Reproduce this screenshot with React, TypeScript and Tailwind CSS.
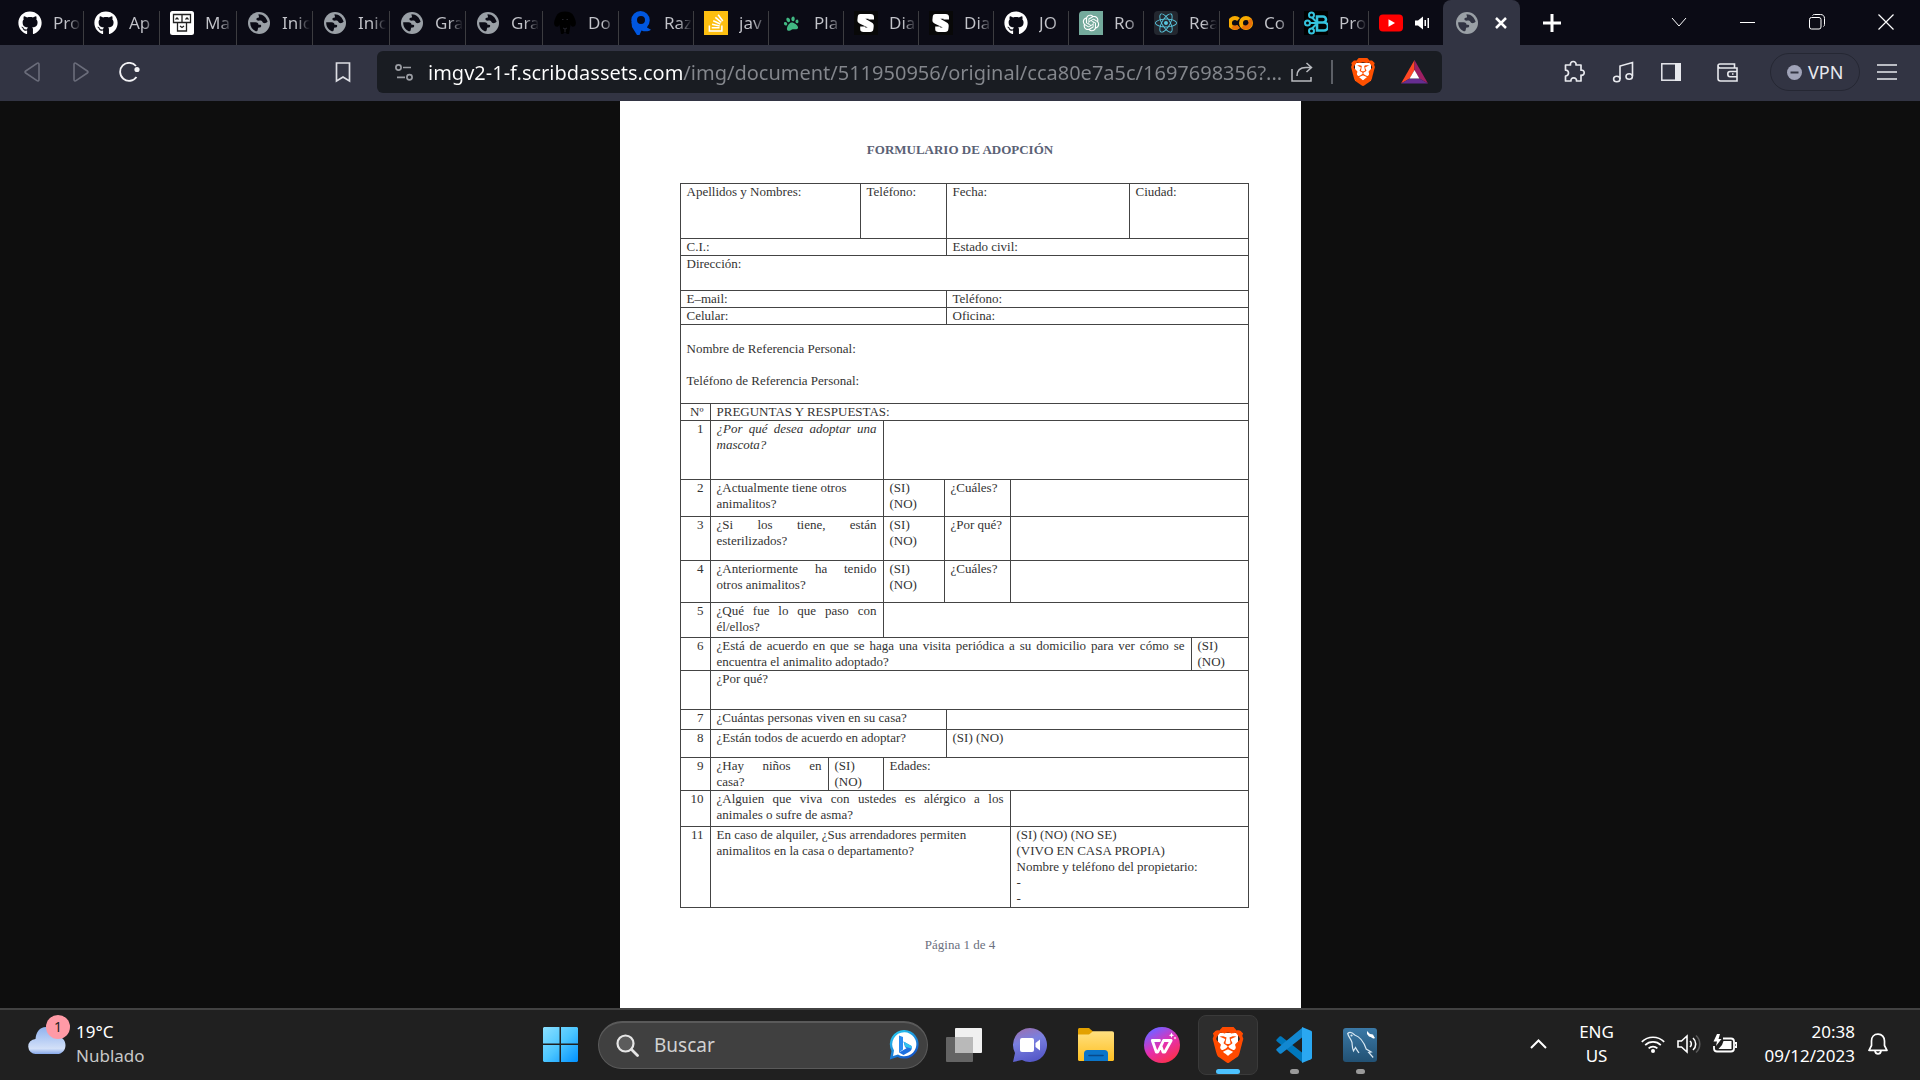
import type { ReactNode } from "react";
import { FaGithub, FaPaw, FaReact, FaStackOverflow } from "react-icons/fa";
import { RiOpenaiFill } from "react-icons/ri";
import { SiBrave } from "react-icons/si";

/* ---------- tab icons ---------- */

const Globe = () => (
  <svg viewBox="0 0 22 22" className="size-[22px]">
    <circle cx="11" cy="11" r="11" fill="#9aa0a6" />
    <path
      className="fill-current"
      d="M2.200 10.200h5.300c2 0 3 1 3 2.600h1.600c1 0 1.300 1 1 1.700-.3 1-1.300 1-2.300 1-.9.200-.8 1.300-1.100 2.400-.2 1.100-1 1.700-2 1.300C4.300 17.600 2 14.500 2.200 10.200zM10.600 2.200c4.600 0 8 3.400 9 7.600-1 1-2.600 1.600-4 1.200-1.200-.4-1-1.600-2.200-2.200-1.200-.5-3.200.3-4.400-.5-1.100-.8-.6-2.300.7-2.500 1.200-.2 1.400-.7 1.200-1.600-.1-.7-.7-1.200-.3-2z"
    />
  </svg>
);

const Github = () => <FaGithub className="size-6 text-white" />;

const Faces = () => (
  <svg viewBox="0 0 24 24" className="size-6" fill="none" stroke="#222" strokeWidth="1.3">
    <rect width="24" height="24" rx="2.5" fill="#fff" stroke="none" />
    <path d="M3.500 3.500h8.500v8H3.500zM12 3.500h8.500v8H12zM7.500 11.500h9v8.500h-9z" />
    <path d="M5.500 8.500l1.500-1.500 1.500 1.500M15.500 8.500l1.500-1.500 1.500 1.500M10 15l2 1.500 2-1.500" />
  </svg>
);

const Dog = () => (
  <svg viewBox="0 0 24 24" className="size-6">
    <path fill="#000" d="M8 1c2-.8 6-.8 8 0 3 .6 5 3.500 6.500 8.500.9 3.200.3 6-2.500 6.300-1.400.1-2-1-2.300-2.500L17 17l-1 6h-2l-2-2-2 2H8l-1-6-.7-3.700C6 14.800 5.400 15.900 4 15.800 1.200 15.500.6 12.700 1.500 9.500 3 4.500 5 1.600 8 1z" />
    <path d="M9 8.500h1.500M13.500 8.500H15M10 17l2 1 2-1M12 18v3" stroke="#24242c" fill="none" />
  </svg>
);

const LetterQ = () => (
  <svg viewBox="0 0 22 24" className="h-6 w-[22px]" fill="#0057e0">
    <path fillRule="evenodd" d="M10.500 0a9 9 0 110 18.500 9 9 0 010-18.500zm.5 5a4 4 0 100 8 4 4 0 000-8z" />
    <path d="M1.500 11L2 16l5 8h2.500l2-4.500c3 1.300 7 1.200 9.500-.7L17 16.500l1-4.500-5 2.500z" />
  </svg>
);

const Stack = () => (
  <span className="flex size-6 items-center justify-center bg-[#fdbf10]">
    <FaStackOverflow className="size-5 text-white" />
  </span>
);

const Paw = () => (
  <span className="flex size-6 items-center justify-center">
    <FaPaw className="size-[15px] -rotate-12 text-[#41b883]" />
  </span>
);

const LetterS = () => (
  <svg viewBox="0 0 24 24" className="size-6">
    <rect width="24" height="24" fill="#080808" />
    <path fill="#fff" d="M6.500 3h10c2.300 0 3.500 1 3.500 3v2.500h-5.500V7.700h-3.200l6 3.600c1.900 1 2.600 2.200 2.400 4.200l-.3 2.500c-.3 2.200-1.300 3-3.300 3H9.500c-2.200 0-3.300-.8-3.300-3v-2.500h5v.9h2.600L6 12.800c-1.700-.8-2.800-2-2.600-3.800l.3-3C3.900 4 4.500 3 6.500 3z" />
  </svg>
);

const ChatGpt = () => (
  <span className="flex size-6 items-center justify-center rounded-tl-sm bg-[#74aa9c]">
    <RiOpenaiFill className="size-5 text-white" />
  </span>
);

const ReactTab = () => (
  <span className="flex size-6 items-center justify-center rounded-sm bg-[#23272f]">
    <FaReact className="size-[22px] text-[#58c4dc]" />
  </span>
);

const Colab = () => (
  <svg viewBox="0 0 24 24" className="size-6" fill="none" strokeWidth="4">
    <path d="M9.500 8.500A5 5 0 109.500 15.500" stroke="#f9ab00" />
    <path d="M3.500 15.500A5 5 0 009.500 15.500" stroke="#e8710a" />
    <circle cx="17" cy="12" r="5" stroke="#f9ab00" />
    <path d="M13.500 15.500A5 5 0 0020.500 8.500" stroke="#e8710a" />
  </svg>
);

const BetterB = () => (
  <svg viewBox="0 0 24 24" className="size-6" fill="none" stroke="#35c3de" strokeWidth="2">
    <rect width="24" height="24" fill="#000" stroke="none" />
    <path d="M13 5.500h6a3 3 0 010 6h-6zM13 11.500h7a4 4 0 010 8h-7z" strokeWidth="2.6" />
    <circle cx="7.500" cy="4" r="2.5" />
    <circle cx="3.500" cy="12" r="2.5" />
    <circle cx="7.500" cy="20" r="2.5" />
    <path d="M6 12h6M8 6.500l4 4M8 17.500l4-4" />
  </svg>
);

const YouTube = () => (
  <svg viewBox="0 0 24 18" className="h-[18px] w-6">
    <rect y=".5" width="24" height="17" rx="4" fill="#f00" />
    <path d="M9.500 5.300v7.400L16 9z" fill="#fff" />
  </svg>
);

const TabSpeaker = () => (
  <svg viewBox="0 0 16 14" className="h-3.5 w-4 text-white" fill="currentColor">
    <path d="M0 4.500h3L8 .5v13l-5-4H0zM9.500 4h1.500v6H9.500zM12.500 2H14v10h-1.500z" />
  </svg>
);

const tabs: { icon: () => ReactNode; label: string }[] = [
  { icon: Github, label: "Pro" },
  { icon: Github, label: "Ap" },
  { icon: Faces, label: "Ma" },
  { icon: Globe, label: "Inic" },
  { icon: Globe, label: "Inic" },
  { icon: Globe, label: "Gra" },
  { icon: Globe, label: "Gra" },
  { icon: Dog, label: "Do" },
  { icon: LetterQ, label: "Raz" },
  { icon: Stack, label: "jav" },
  { icon: Paw, label: "Pla" },
  { icon: LetterS, label: "Dia" },
  { icon: LetterS, label: "Dia" },
  { icon: Github, label: "JO" },
  { icon: ChatGpt, label: "Ro" },
  { icon: ReactTab, label: "Rea" },
  { icon: Colab, label: "Co" },
  { icon: BetterB, label: "Pro" },
];

const tabWidths = [
  "w-[76px]", "w-[76px]", "w-[77px]", "w-[76px]", "w-[77px]", "w-[76px]", "w-[77px]", "w-[76px]",
];

function TabStrip() {
  return (
    <header className="flex h-[45px] shrink-0 bg-[#0b0b15] pl-2 text-[#0b0b15]">
      <nav className="flex" aria-label="Pestañas">
        {tabs.map(({ icon: Icon, label }, i) => (
          <button
            key={i}
            className={`flex shrink-0 items-center justify-start pt-px pl-2.5 ${tabWidths[i] ?? "w-[75px]"}`}
          >
            <span className="flex w-6 shrink-0 justify-center">
              <Icon />
            </span>
            <span className="ml-[11px] shrink-0 bg-[linear-gradient(90deg,#c3c4ca_14px,transparent_28px)] bg-clip-text text-left text-[17px] leading-6 whitespace-nowrap text-transparent">
              {label}
            </span>
            <span className="mt-[10px] ml-auto h-[34px] w-px bg-[#3c3c40]" />
          </button>
        ))}
        <button aria-label="YouTube" className="flex w-[74px] shrink-0 items-center gap-3 pt-px pl-2.5">
          <YouTube />
          <TabSpeaker />
        </button>
      </nav>
      <div className="flex w-[77px] shrink-0 items-center gap-4 rounded-t-lg bg-[#323443] pl-[13px] text-[#323443]">
        <Globe />
        <button aria-label="Cerrar pestaña">
          <svg viewBox="0 0 14 14" className="size-3.5" stroke="#fff" strokeWidth="2.5">
            <path d="M2 2l10 10M12 2L2 12" />
          </svg>
        </button>
      </div>
      <button aria-label="Nueva pestaña" className="ml-[22px]">
        <svg viewBox="0 0 20 20" className="size-5" stroke="#fff" strokeWidth="3">
          <path d="M10 1v18M1 10h18" />
        </svg>
      </button>
      <div className="ml-auto flex pb-px text-white">
        <button aria-label="Buscar pestañas" className="flex w-[68px] items-center justify-center">
          <svg viewBox="0 0 16 10" className="h-2.5 w-4" fill="none" stroke="currentColor">
            <path d="M1 1l7 8 7-8" />
          </svg>
        </button>
        <button aria-label="Minimizar" className="flex w-[69px] items-center justify-center">
          <span className="h-px w-[15px] bg-white" />
        </button>
        <button aria-label="Restaurar" className="flex w-[69px] items-center justify-center">
          <svg viewBox="0 0 16 16" className="size-4" fill="none" stroke="currentColor">
            <rect x=".5" y="3.5" width="11.5" height="11.5" rx="2" />
            <path d="M3.500 1.500C4 .8 4.500.5 5.500.5h6c2.500 0 4 1.500 4 4v6c0 1-.3 1.500-1 2" />
          </svg>
        </button>
        <button aria-label="Cerrar" className="flex w-[69px] items-center justify-center">
          <svg viewBox="0 0 16 16" className="size-4" stroke="currentColor" strokeWidth="1.2">
            <path d="M.5.5l15 15M15.500.5l-15 15" />
          </svg>
        </button>
      </div>
    </header>
  );
}

/* ---------- toolbar ---------- */

function Triangle({ flip }: { flip?: boolean }) {
  return (
    <svg viewBox="0 0 16 20" className={flip ? "h-5 w-4 rotate-180" : "h-5 w-4"} fill="none" stroke="#6b6d7b" strokeWidth="1.6">
      <path d="M15 2.500v15c0 1.300-1 1.900-2 1.200L1.700 11c-.9-.6-.9-1.400 0-2L13 1.300c1-.7 2-.1 2 1.200z" />
    </svg>
  );
}

/* The lion is a cut-out in the shield, so a white plate behind it fills the face. */
function BraveShield({ className }: { className: string }) {
  return (
    <span className={`relative flex items-center justify-center ${className}`}>
      <span className="absolute inset-x-[22%] inset-y-[18%] bg-white" />
      <SiBrave className="relative size-full" />
    </span>
  );
}

function AddressBar() {
  return (
    <div className="flex h-[42px] w-[1065px] min-w-0 items-center rounded-md bg-[#191c22] pl-[18px]">
      <button aria-label="Información del sitio">
        <svg viewBox="0 0 18 17" className="h-[17px] w-[18px]" fill="none" stroke="#9b9da3" strokeWidth="1.7">
          <circle cx="3.500" cy="3.500" r="2.6" />
          <circle cx="14.500" cy="13.300" r="2.6" />
          <path d="M8 3.500h8M2 13.300h8" />
        </svg>
      </button>
      <input
        aria-label="Dirección"
        readOnly
        value="imgv2-1-f.scribdassets.com/img/document/511950956/original/cca80e7a5c/1697698356?..."
        className="ml-[15px] h-8 min-w-0 flex-1 bg-[linear-gradient(90deg,#fff_254px,#84878d_254px)] bg-clip-text text-xl text-transparent outline-none"
      />
      <button aria-label="Compartir" className="ml-2">
        <svg viewBox="0 0 22 20" className="h-5 w-[22px]" fill="none" stroke="#b9bbc0" strokeWidth="1.5">
          <path d="M1 7v12h19v-4M6 14c0-5 3-8.500 9-8.500h5M15.500 1l5 4.500-5 4.500" />
        </svg>
      </button>
      <span className="mr-4 ml-[18px] h-6 w-[2px] bg-[#5c5f66]" />
      <button aria-label="Brave Shields">
        <BraveShield className="size-7 text-[#ff5000]" />
      </button>
      <button aria-label="Recompensas" className="mr-[14px] ml-6">
        <svg viewBox="0 0 27 24" className="h-6 w-[27px]">
          <path d="M13.500 0L0 23.500l8.700-5 4.800-8.500z" fill="#ff4724" />
          <path d="M13.500 0L27 23.500l-8.700-5L13.500 10z" fill="#9e1f63" />
          <path d="M0 23.500h27l-8.700-5H8.700z" fill="#662d91" />
          <path d="M13.500 10l4.900 8.500H8.600z" fill="#fff" />
        </svg>
      </button>
    </div>
  );
}

function Toolbar() {
  return (
    <div className="flex h-14 shrink-0 items-center justify-between bg-[#323443] pr-[23px] pb-[2px] pl-6 text-[#e8e9ee]">
      <div className="flex min-w-0 items-center">
        <button aria-label="Atrás"><Triangle /></button>
        <button aria-label="Adelante" className="ml-[33px]"><Triangle flip /></button>
        <button aria-label="Recargar" className="ml-[30px]">
          <svg viewBox="0 0 22 20" className="h-5 w-[22px]" fill="none" stroke="#f2f2f5" strokeWidth="1.8">
            <path d="M17 4A9 9 0 1017.500 15" />
            <circle cx="18" cy="7.500" r="2.6" fill="#f2f2f5" stroke="none" />
          </svg>
        </button>
        <button aria-label="Marcador" className="ml-[193px]">
          <svg viewBox="0 0 18 22" className="h-[22px] w-[18px]" fill="none" stroke="#dcdde3" strokeWidth="1.7">
            <path d="M2.500 2h13v18L9 16l-6.500 4z" />
          </svg>
        </button>
        <div className="ml-[25px] flex min-w-0">
          <AddressBar />
        </div>
      </div>
      <div className="flex items-center">
        <button aria-label="Extensiones">
          <svg viewBox="0 0 24 24" className="size-6" fill="none" stroke="currentColor" strokeWidth="1.7" strokeLinejoin="round">
            <path d="M4 5h4.500C8 3 9.500 1.500 11.200 1.500S14.500 3 14 5H19v5.200c1.800-.3 3.200.8 3.200 2.500S20.800 15.600 19 15.200V21h-4.500c.3-1.800-1-3.200-2.800-3.200S8.600 19.200 9 21H3.500v-5c1.800 0 3-1.300 3-3s-1.200-3-3-2.800V5z" />
          </svg>
        </button>
        <button aria-label="Multimedia" className="ml-[26px]">
          <svg viewBox="0 0 22 22" className="size-[22px]" fill="none" stroke="currentColor" strokeWidth="1.6">
            <path d="M8 18V5l12.500-3.500V15" />
            <ellipse cx="4.800" cy="18" rx="3.2" ry="2.7" />
            <ellipse cx="17.200" cy="15.500" rx="3.2" ry="2.7" />
          </svg>
        </button>
        <button aria-label="Panel lateral" className="ml-[27px]">
          <svg viewBox="0 0 20 18" className="h-[18px] w-5" fill="none" stroke="currentColor" strokeWidth="1.5">
            <rect x=".8" y=".8" width="18.4" height="16.4" />
            <path d="M14 0h6v18h-6z" fill="currentColor" stroke="none" />
          </svg>
        </button>
        <button aria-label="Cartera" className="ml-9">
          <svg viewBox="0 0 21 19" className="h-[19px] w-[21px]" fill="none" stroke="currentColor" strokeWidth="1.6">
            <path d="M1 2.500v13c0 1.500.8 2.500 2.500 2.500H20V5H3C1.500 5 1 4 1 2.800S1.800 1 3 1h14.500v4M20 8.500h-7c-1.500 0-2.200.8-2.200 2.500s.7 2.700 2.200 2.700h7M15 11h1.500" />
          </svg>
        </button>
        <button className="ml-8 flex h-[38px] w-[90px] items-center rounded-full border border-[#252733] pl-4 text-[18px]">
          <svg viewBox="0 0 15 15" className="mr-[6px] size-[15px]">
            <circle cx="7.500" cy="7.500" r="7.5" fill="#a0a3b8" />
            <path d="M3.500 7.500h8" stroke="#323443" strokeWidth="2" />
          </svg>
          VPN
        </button>
        <button aria-label="Menú" className="ml-[17px]">
          <svg viewBox="0 0 20 16" className="h-4 w-5" stroke="currentColor" strokeWidth="1.7">
            <path d="M0 1h20M0 8h20M0 15h20" />
          </svg>
        </button>
      </div>
    </div>
  );
}

/* ---------- document ---------- */

function Cell({ span = 1, className = "", children }: { span?: number; className?: string; children?: ReactNode }) {
  return (
    <td colSpan={span} className={`border border-[#444] px-[6px] align-top ${className}`}>
      {children}
    </td>
  );
}

const SiNo = () => (
  <>
    (SI)
    <br />
    (NO)
  </>
);

function AdoptionForm() {
  return (
    <article className="mx-auto w-[681px] flex-1 bg-white font-['Liberation_Serif',serif] text-[13px] leading-4 text-[#333]">
      <h1 className="pt-[41px] text-center font-bold text-[#5a6175]">FORMULARIO DE ADOPCIÓN</h1>
      <table className="mt-[25px] ml-[60px] w-[568px] table-fixed border-collapse">
        <colgroup>
          <col className="w-[30px]" />
          <col className="w-[118px]" />
          <col className="w-[32px]" />
          <col className="w-[23px]" />
          <col className="w-[61px]" />
          <col className="w-[2px]" />
          <col className="w-[64px]" />
          <col className="w-[119px]" />
          <col className="w-[62px]" />
          <col className="w-[57px]" />
        </colgroup>
        <tbody>
          <tr className="h-[55px]">
            <Cell span={3}>Apellidos y Nombres:</Cell>
            <Cell span={3}>Teléfono:</Cell>
            <Cell span={2}>Fecha:</Cell>
            <Cell span={2}>Ciudad:</Cell>
          </tr>
          <tr className="h-[17px]">
            <Cell span={6}>C.I.:</Cell>
            <Cell span={4}>Estado civil:</Cell>
          </tr>
          <tr className="h-[35px]">
            <Cell span={10}>Dirección:</Cell>
          </tr>
          <tr className="h-[17px]">
            <Cell span={6}>E–mail:</Cell>
            <Cell span={4}>Teléfono:</Cell>
          </tr>
          <tr className="h-[17px]">
            <Cell span={6}>Celular:</Cell>
            <Cell span={4}>Oficina:</Cell>
          </tr>
          <tr className="h-[79px]">
            <Cell span={10}>
              <p className="pt-4">Nombre de Referencia Personal:</p>
              <p className="pt-4">Teléfono de Referencia Personal:</p>
            </Cell>
          </tr>
          <tr className="h-[17px]">
            <Cell className="text-right">Nº</Cell>
            <Cell span={9}>PREGUNTAS Y RESPUESTAS:</Cell>
          </tr>
          <tr className="h-[59px]">
            <Cell className="text-right">1</Cell>
            <Cell span={3} className="text-justify italic">¿Por qué desea adoptar una mascota?</Cell>
            <Cell span={6} />
          </tr>
          <tr className="h-[37px]">
            <Cell className="text-right">2</Cell>
            <Cell span={3}>¿Actualmente tiene otros animalitos?</Cell>
            <Cell><SiNo /></Cell>
            <Cell span={2}>¿Cuáles?</Cell>
            <Cell span={3} />
          </tr>
          <tr className="h-[44px]">
            <Cell className="text-right">3</Cell>
            <Cell span={3} className="text-justify">¿Si los tiene, están esterilizados?</Cell>
            <Cell><SiNo /></Cell>
            <Cell span={2} className="whitespace-nowrap">¿Por qué?</Cell>
            <Cell span={3} />
          </tr>
          <tr className="h-[42px]">
            <Cell className="text-right">4</Cell>
            <Cell span={3} className="text-justify">¿Anteriormente ha tenido otros animalitos?</Cell>
            <Cell><SiNo /></Cell>
            <Cell span={2}>¿Cuáles?</Cell>
            <Cell span={3} />
          </tr>
          <tr className="h-[35px]">
            <Cell className="text-right">5</Cell>
            <Cell span={3} className="text-justify">¿Qué fue lo que paso con él/ellos?</Cell>
            <Cell span={6} />
          </tr>
          <tr className="h-[33px]">
            <Cell className="text-right">6</Cell>
            <Cell span={8} className="text-justify">
              ¿Está de acuerdo en que se haga una visita periódica a su domicilio para ver cómo se encuentra el animalito adoptado?
            </Cell>
            <Cell><SiNo /></Cell>
          </tr>
          <tr className="h-[39px]">
            <Cell />
            <Cell span={9}>¿Por qué?</Cell>
          </tr>
          <tr className="h-[20px]">
            <Cell className="text-right">7</Cell>
            <Cell span={5}>¿Cuántas personas viven en su casa?</Cell>
            <Cell span={4} />
          </tr>
          <tr className="h-[28px]">
            <Cell className="text-right">8</Cell>
            <Cell span={5}>¿Están todos de acuerdo en adoptar?</Cell>
            <Cell span={4}>(SI) (NO)</Cell>
          </tr>
          <tr className="h-[33px]">
            <Cell className="text-right">9</Cell>
            <Cell>
              <span className="block [text-align-last:justify]">¿Hay niños en</span>
              casa?
            </Cell>
            <Cell span={2}><SiNo /></Cell>
            <Cell span={6}>Edades:</Cell>
          </tr>
          <tr className="h-[36px]">
            <Cell className="text-right">10</Cell>
            <Cell span={6} className="text-justify">
              ¿Alguien que viva con ustedes es alérgico a los animales o sufre de asma?
            </Cell>
            <Cell span={3} />
          </tr>
          <tr className="h-[80px]">
            <Cell className="text-right">11</Cell>
            <Cell span={6}>
              En caso de alquiler, ¿Sus arrendadores permiten
              <br />
              animalitos en la casa o departamento?
            </Cell>
            <Cell span={3}>
              <p>(SI) (NO) (NO SE)</p>
              <p>(VIVO EN CASA PROPIA)</p>
              <p>Nombre y teléfono del propietario:</p>
              <p>-</p>
              <p>-</p>
            </Cell>
          </tr>
        </tbody>
      </table>
      <p className="mt-[29px] text-center text-[#6b7080]">Página 1 de 4</p>
    </article>
  );
}

/* ---------- taskbar ---------- */

const WindowsLogo = () => (
  <svg viewBox="0 0 35 35" className="size-[35px]">
    <defs>
      <linearGradient id="win" x1="0" y1="0" x2="1" y2="1">
        <stop offset="0" stopColor="#8be0ff" />
        <stop offset=".5" stopColor="#4cc6ff" />
        <stop offset="1" stopColor="#0090ff" />
      </linearGradient>
    </defs>
    <path d="M1 0h15.500v16.500H0V1zM18 0h16l1 1v15.500H18zM0 18h16.500v17H1l-1-1zM18 18h17v16l-1 1H18z" fill="url(#win)" />
  </svg>
);

const BingLogo = () => (
  <svg viewBox="0 0 30 30" className="size-[30px]">
    <defs>
      <linearGradient id="bing" x1="0" y1="0" x2=".6" y2="1">
        <stop offset="0" stopColor="#27d5f5" />
        <stop offset="1" stopColor="#1456c8" />
      </linearGradient>
    </defs>
    <path d="M15.500 0a14.300 14.300 0 11-7 26.900L.8 29.500 2.500 21A14.300 14.300 0 0115.500 0z" fill="url(#bing)" />
    <path d="M15.500 2.300A12 12 0 119 24.500l-5 1.500 1-5.500A12 12 0 0115.500 2.300z" fill="#fff" />
    <path d="M10 5.500l4 1.500v12.500l-4 3z" fill="#2a8bf0" />
    <path d="M14.500 11.500l8 4.500c1 3-.5 5-2.500 6l-5.500 3-4.500-2.500 7.500-4.300-1.500-1.200z" fill="#1d6fe0" />
    <path d="M14.500 11.500l8 4.500v2.500l-6-1.500z" fill="#2fc4ee" />
  </svg>
);

const TaskView = () => (
  <svg viewBox="0 0 36 34" className="h-[34px] w-9">
    <rect x="9" width="27" height="25" rx="1" fill="#f0f0f0" />
    <rect y="9" width="27" height="25" rx="1" fill="#646464" />
    <path d="M9 9h18v16H9z" fill="#b9b9b9" />
  </svg>
);

const Chat = () => (
  <svg viewBox="0 0 34 34" className="size-[34px]">
    <defs>
      <linearGradient id="chat" x1=".2" y1="0" x2=".5" y2="1">
        <stop offset="0" stopColor="#9a70b0" />
        <stop offset=".4" stopColor="#7a80e0" />
        <stop offset="1" stopColor="#5558c8" />
      </linearGradient>
    </defs>
    <path d="M17 0a17 17 0 11-8 32L0 34l2-9A17 17 0 0117 0z" fill="url(#chat)" />
    <rect x="7" y="10" width="14" height="14" rx="2" fill="#fff" />
    <path d="M22.500 15l4.500-3.500v11L22.500 19z" fill="#fff" />
  </svg>
);

const Folder = () => (
  <svg viewBox="0 0 36 33" className="h-[33px] w-9">
    <defs>
      <linearGradient id="folder" x1="0" y1="0" x2="0" y2="1">
        <stop offset="0" stopColor="#ffe080" />
        <stop offset="1" stopColor="#ffc021" />
      </linearGradient>
    </defs>
    <path d="M0 1.500C0 .7.700 0 1.500 0H11l4 3.500V8H0z" fill="#e3a100" />
    <path d="M0 6.500h11l4-3.200h19c1.300 0 2 .7 2 2v26.200c0 .9-.6 1.500-1.500 1.500h-33C.6 33 0 32.400 0 31.500z" fill="url(#folder)" />
    <path d="M6 33v-7.500c0-2 1.300-3.500 3.500-3.500h17c2.200 0 3.500 1.500 3.500 3.500V33z" fill="#0b75c9" />
    <path d="M11 27.500h14" stroke="#084a8a" strokeWidth="1.6" strokeLinecap="round" />
  </svg>
);

const Wps = () => (
  <svg viewBox="0 0 36 36" className="size-9">
    <defs>
      <linearGradient id="wps" x1=".2" y1="0" x2=".8" y2="1">
        <stop offset=".1" stopColor="#7c5cff" />
        <stop offset=".5" stopColor="#e42fb0" />
        <stop offset="1" stopColor="#ff3040" />
      </linearGradient>
    </defs>
    <circle cx="18" cy="18" r="18" fill="url(#wps)" />
    <path
      d="M15.500 13.500H8.300l4 11.500h1.500l5.700-11.500M17 19.500l2 5.500h1.800l6.400-11.500h-7.700L17 19"
      fill="none"
      stroke="#fff"
      strokeWidth="2.8"
      strokeLinecap="round"
      strokeLinejoin="round"
    />
    <path d="M27.500 5.500l.8 1.900 1.900.8-1.900.8-.8 1.900-.8-1.900-1.900-.8 1.900-.8zM31 9.500l.5 1 1 .5-1 .5-.5 1-.5-1-1-.5 1-.5z" fill="#fff" />
  </svg>
);

const BraveTask = () => <BraveShield className="size-9 text-[#ff4a00]" />;

const VsCode = () => (
  <svg viewBox="0 0 36 36" className="size-9">
    <path d="M.8 12.200l2.700-2.600c.6-.5 1.300-.5 1.900-.1L26 25.500V35L.8 14.200c-.7-.6-.7-1.400 0-2z" fill="#0078bd" />
    <path d="M.8 23.800l2.700 2.600c.6.500 1.300.5 1.900.1L26 10.500V1L.8 21.800c-.7.600-.7 1.400 0 2z" fill="#1288d1" />
    <path d="M26 0l9 3.800c.6.300 1 .8 1 1.500v25.400c0 .7-.4 1.200-1 1.500L26 36z" fill="#2aa8f2" />
  </svg>
);

const MySql = () => (
  <svg viewBox="0 0 34 34" className="size-[34px]" fill="none" stroke="#d9e8f2" strokeWidth="1.2">
    <defs>
      <linearGradient id="mysql" x1="0" y1="0" x2="0" y2="1">
        <stop offset="0" stopColor="#3b79a6" />
        <stop offset="1" stopColor="#225173" />
      </linearGradient>
    </defs>
    <rect width="34" height="34" rx="3" fill="url(#mysql)" stroke="none" />
    <path d="M16 25c-1.500-2.500-3-4-3.500-5.500-1 1.500-1.500 2.500-2 3.500C9 20 9.300 17 9 14.500 8 11 5.500 9 4.700 5.500c2-1.800 5-.5 7 1.500 6 2 9.500 8 11.500 14l5 3-2.500.5 4.500 5" />
    <circle cx="8.500" cy="7.500" r=".5" />
    <path d="M24 3l3 3 3 .5 2 4-2-.8-4-1.200L24 6z" fill="#fff" stroke="none" />
    <path d="M27 7l4 3" stroke="#fff" strokeWidth="2" />
  </svg>
);

const apps: { name: string; icon: () => ReactNode; state?: "active" | "open" }[] = [
  { name: "Vista de tareas", icon: TaskView },
  { name: "Chat", icon: Chat },
  { name: "Explorador de archivos", icon: Folder },
  { name: "WPS Office", icon: Wps },
  { name: "Brave", icon: BraveTask, state: "active" },
  { name: "Visual Studio Code", icon: VsCode, state: "open" },
  { name: "MySQL Workbench", icon: MySql, state: "open" },
];

function Taskbar() {
  return (
    <footer className="grid h-[72px] shrink-0 grid-cols-[1fr_auto_1fr] items-center border-t-2 border-[#424242] bg-[#202020] pb-px text-[17px] leading-6 text-white">
      <button className="flex items-center pb-px pl-7 text-left">
        <span className="relative">
          <svg viewBox="0 0 38 28" className="mb-2 h-7 w-[38px]">
            <defs>
              <linearGradient id="cloud" x1="0" y1="0" x2="0" y2="1">
                <stop offset="0" stopColor="#8fb2ee" />
                <stop offset=".8" stopColor="#d3e0f8" />
                <stop offset="1" stopColor="#86a8ea" />
              </linearGradient>
            </defs>
            <path d="M8 28a7.500 7.500 0 01-.5-15C8 6 11.500 1 18 1c5.500 0 9 4 10 9.500 5.500-.5 9.500 3.500 9.500 8.700 0 5-3.500 8.800-8.500 8.800z" fill="url(#cloud)" />
          </svg>
          <span className="absolute -top-[11px] left-[18px] flex size-6 items-center justify-center rounded-full bg-[#ff9aa6] text-sm text-[#222]">
            1
          </span>
        </span>
        <span className="ml-[10px]">
          <span className="block">19°C</span>
          <span className="block text-[#c8c8c8]">Nublado</span>
        </span>
      </button>

      <div className="flex items-center">
        <button aria-label="Inicio" className="flex size-[60px] items-center justify-center">
          <WindowsLogo />
        </button>
        <label className="mr-[6px] ml-2 flex h-12 w-[330px] items-center rounded-full border border-t-2 border-[#5a5a5a] bg-[#404040] pr-2 pl-[17px]">
          <svg viewBox="0 0 23 23" className="size-[23px] shrink-0" fill="none" stroke="#e6e6e6" strokeWidth="2.2" strokeLinecap="round">
            <circle cx="9.500" cy="9.500" r="8" fill="#5c5c5c" />
            <path d="M15.500 15.500l6 6" strokeWidth="2.8" />
          </svg>
          <input aria-label="Buscar" placeholder="Buscar" className="ml-[15px] min-w-0 flex-1 bg-transparent text-[19px] outline-none placeholder:text-[#d2d2d2]" />
          <BingLogo />
        </label>
        <div className="flex gap-[6px]">
          {apps.map(({ name, icon: Icon, state }) => (
            <button
              key={name}
              aria-label={name}
              className={
                state === "active"
                  ? "relative flex size-[60px] items-center justify-center rounded-lg border border-[#3a3a3a] bg-[#2d2d2d]"
                  : "relative flex size-[60px] items-center justify-center"
              }
            >
              <Icon />
              {state === "active" && <span className="absolute bottom-0 h-[5px] w-6 rounded-full bg-[#4cc2ff]" />}
              {state === "open" && <span className="absolute bottom-px h-[5px] w-[9px] rounded-full bg-[#9a9a9a]" />}
            </button>
          ))}
        </div>
      </div>

      <div className="flex items-center justify-end pr-8 pb-px">
        <button aria-label="Mostrar iconos ocultos">
          <svg viewBox="0 0 17 10" className="h-2.5 w-[17px]" fill="none" stroke="#fff" strokeWidth="2">
            <path d="M1 9l7.500-7.500L16 9" />
          </svg>
        </button>
        <button className="ml-8 w-9 text-center">
          ENG
          <br />
          US
        </button>
        <button aria-label="Red, volumen y batería" className="ml-[26px] flex items-center gap-3">
          <svg viewBox="0 0 24 18" className="h-[18px] w-6" fill="none" stroke="#fff" strokeWidth="1.7">
            <path d="M.8 6.800a16 16 0 0122.400 0M4.200 10.200a11 11 0 0115.600 0M7.600 13.400a6.200 6.200 0 018.800 0" />
            <circle cx="12" cy="16" r="2" fill="#fff" stroke="none" />
          </svg>
          <svg viewBox="0 0 24 20" className="h-5 w-6" fill="none" stroke="#fff" strokeWidth="1.6">
            <path d="M1 7h3.500L10 2v16l-5.500-5H1zM13 7a4 4 0 010 6M16 4a8 8 0 010 12" />
            <path d="M19 1.500a11.500 11.500 0 010 17" stroke="#5a5a5a" />
          </svg>
          <svg viewBox="0 0 24 20" className="h-5 w-6" fill="none" stroke="#fff" strokeWidth="1.8">
            <path d="M10 4.500h8c2 0 3 1 3 3v7c0 2-1 3-3 3H4c-2 0-3-1-3-3V12M22 9h1.500v4H22" />
            <path d="M10.500 7h8v8h-13l3.500-4z" fill="#fff" stroke="none" />
            <path d="M4 0L.5 7.500H4L3 12l5.500-7H5.500L7 0z" fill="#fff" stroke="none" />
          </svg>
        </button>
        <button className="ml-7 text-right">
          20:38
          <br />
          09/12/2023
        </button>
        <button aria-label="Notificaciones" className="ml-[13px]">
          <svg viewBox="0 0 20 22" className="h-[22px] w-5" fill="none" stroke="#fff" strokeWidth="1.7" strokeLinejoin="round">
            <path d="M10 1.200c-4 0-6.500 3-6.500 6.800v4.500L1 17.300h18l-2.500-4.800V8c0-3.800-2.500-6.800-6.500-6.800zM7 18c.3 1.800 1.500 2.800 3 2.800s2.700-1 3-2.800" />
          </svg>
        </button>
      </div>
    </footer>
  );
}

export default function App() {
  return (
    <div className="flex min-h-screen flex-col bg-[#0e0e0e] font-['Noto_Sans',sans-serif]">
      <TabStrip />
      <Toolbar />
      <main className="flex flex-1 flex-col">
        <AdoptionForm />
      </main>
      <Taskbar />
    </div>
  );
}
